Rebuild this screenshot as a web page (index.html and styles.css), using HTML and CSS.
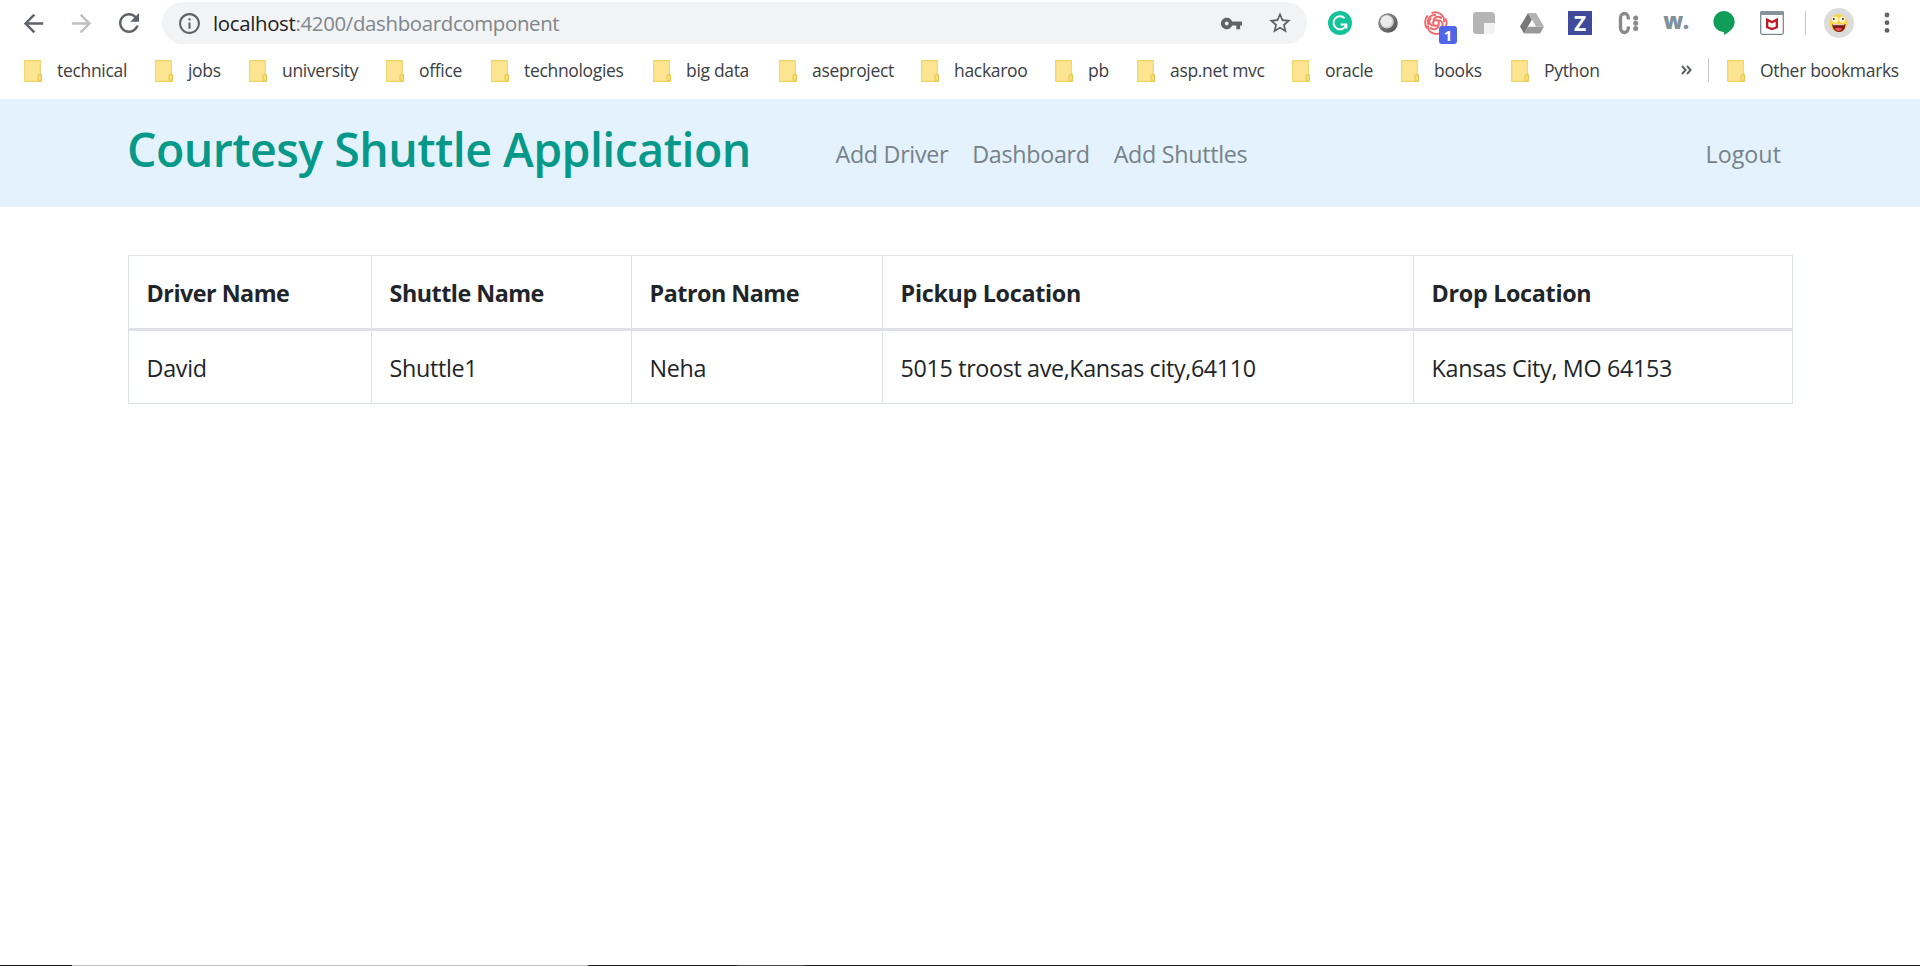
FILE: index.html
```html
<!DOCTYPE html>
<html lang="en">
<head>
<meta charset="utf-8">
<title>Courtesy Shuttle Application</title>
<link rel="stylesheet" href="styles.css">
</head>
<body>
<svg class="defs" width="0" height="0">
  <defs>
    <linearGradient id="sphere" x1="0" y1="0" x2="1" y2="1"><stop offset="0" stop-color="#9a9a9a"/><stop offset="1" stop-color="#4d4d4d"/></linearGradient>
    <symbol id="folder" viewBox="0 0 18 22">
      <path d="M.7.7h15.600v14h1v6.600H.7z" fill="#fee591" stroke="#efd468" stroke-width="1.200"/>
      <rect x="14" y="14.700" width="3.300" height="6.400" rx="1" fill="#fbe078" stroke="#e3c34d" stroke-width="1"/>
    </symbol>
  </defs>
</svg>

<header class="toolbar">
  <span class="slot"><svg width="29" height="29" viewBox="0 0 24 24" fill="#5f6368"><path d="M20 11H7.83l5.59-5.59L12 4l-8 8 8 8 1.41-1.41L7.83 13H20v-2z"/></svg></span>
  <span class="slot"><svg width="29" height="29" viewBox="0 0 24 24" fill="#bdbfc1"><path d="M12 4l-1.41 1.41L16.17 11H4v2h12.17l-5.58 5.59L12 20l8-8z"/></svg></span>
  <span class="slot"><svg width="30" height="30" viewBox="0 0 24 24" fill="#5f6368"><path d="M17.65 6.35C16.2 4.9 14.21 4 12 4c-4.42 0-7.99 3.58-7.99 8s3.57 8 7.99 8c3.73 0 6.84-2.55 7.73-6h-2.08c-.82 2.33-3.04 4-5.65 4-3.31 0-6-2.69-6-6s2.69-6 6-6c1.66 0 3.14.69 4.22 1.78L13 11h7V4l-2.35 2.35z"/></svg></span>
  <div class="omnibox">
    <svg class="info" width="25" height="25" viewBox="0 0 24 24" fill="#5f6368"><path d="M11 7h2v2h-2zm0 4h2v6h-2zm1-9C6.48 2 2 6.48 2 12s4.48 10 10 10 10-4.48 10-10S17.52 2 12 2zm0 18c-4.41 0-8-3.59-8-8s3.59-8 8-8 8 3.59 8 8-3.59 8-8 8z"/></svg>
    <span class="url"><b>localhost</b>:4200/dashboardcomponent</span>
    <svg class="key" width="23" height="23" viewBox="0 0 24 24" fill="#5f6368"><path d="M12.65 10C11.83 7.67 9.61 6 7 6c-3.31 0-6 2.69-6 6s2.69 6 6 6c2.61 0 4.83-1.67 5.65-4H17v4h4v-4h2v-4H12.65zM7 14c-1.1 0-2-.9-2-2s.9-2 2-2 2 .9 2 2-.9 2-2 2z"/></svg>
    <svg width="26" height="26" viewBox="0 0 24 24" fill="#5f6368"><path d="M22 9.24l-7.19-.62L12 2 9.19 8.63 2 9.24l5.46 4.73L5.82 21 12 17.27 18.18 21l-1.63-7.03L22 9.24zM12 15.4l-3.76 2.27 1-4.28-3.32-2.88 4.38-.38L12 6.1l1.71 4.04 4.38.38-3.32 2.88 1 4.28L12 15.4z"/></svg>
  </div>
  <div class="extensions">
    <span class="slot"><svg width="24" height="24"><circle cx="12" cy="12" r="12" fill="#15c39a"/><path d="M16.6 7.2A6.5 6.5 0 1 0 18.2 13.8M12.6 13.4h5.8v4" fill="none" stroke="#fff" stroke-width="2"/></svg></span>
    <span class="slot"><svg width="24" height="24"><circle cx="12" cy="12" r="9.8" fill="url(#sphere)"/><circle cx="11" cy="10.8" r="6.8" fill="#cfcfcf"/><circle cx="10.3" cy="10.2" r="5.6" fill="#ececec"/></svg></span>
    <span class="slot rose"><svg width="24" height="24" viewBox="0 0 24 24" fill="none" stroke="#f2696c" stroke-width="1.9"><circle cx="12" cy="12" r="2.9"/><path d="M9.500 10.500C9.500 6 14.500 4 18 7.500"/><path d="M13.500 9.500C18 8.500 20.500 13.500 17 17.500"/><path d="M14.500 13.500C14.500 18 9.500 20 6 16.500"/><path d="M10.500 14.500C6 15.500 3.500 10.500 7 6.500"/><path d="M4.500 14C2.500 9 6 3 12 4.200M7.500 2.200C13 -.5 21 3.500 20 11M21.500 7.500C24.500 13 21 19.500 15 19.800M17.500 21.500C11 25 3.500 21.500 4 14.500M3 17.500C.3 13.500 .5 8 3.800 4.500"/></svg><i class="badge">1</i></span>
    <span class="slot"><svg width="24" height="24"><path d="M4 1h15a4 4 0 0 1 4 4v7H12v11H4.500A3.500 3.500 0 0 1 1 19.500V4a3 3 0 0 1 3-3z" fill="#b5b5b5"/><path d="M12 12h11v7.500a3.500 3.500 0 0 1-3.500 3.500H12z" fill="#f2f2f2"/></svg></span>
    <span class="slot"><svg width="24" height="24"><path d="M8 2L0 15.500 4 22.500 12 8.800z" fill="#777"/><path d="M8 15.500h16l-4 7H4z" fill="#999"/><path d="M16 2l8 13.500h-8L8 2z" fill="#b3b3b3"/><path d="M12 9l3.900 6.500H8.100z" fill="#fff"/></svg></span>
    <span class="slot"><svg width="24" height="34"><path fill="#3f4a9b" d="M0 5h24v24H0z"/><text class="logo-z" x="12" y="24.600" text-anchor="middle">Z</text></svg></span>
    <span class="slot"><svg width="24" height="24"><path d="M12.300 8.500V7a3.900 4.500 0 0 0-7.800 0v10a3.900 4.500 0 0 0 7.800 0v-1.500" fill="none" stroke="#8a8a8a" stroke-width="3.400"/><g fill="#8a8a8a"><circle cx="19.700" cy="7" r="2.500"/><circle cx="19.700" cy="12.300" r="2.500"/><circle cx="19.700" cy="17.600" r="2.500"/></g></svg></span>
    <span class="slot logo-w">w.</span>
    <span class="slot"><svg width="24" height="24"><path d="M12 0a10.800 10.800 0 0 1 10.700 10.700c0 5.500-4.300 10-10.700 13.300v-2.800A10.600 10.600 0 1 1 12 0z" fill="#0f9d58"/></svg></span>
    <span class="slot"><svg width="24" height="24"><rect x=".7" y=".7" width="22.600" height="22.600" rx="1.500" fill="#fff" stroke="#7d8a92" stroke-width="1.300"/><path d="M0 1.500Q0 0 1.500 0h21Q24 0 24 1.500V4H0z" fill="#87939b"/><path d="M7.200 8.700l4.800 2.500 4.800-2.500v7.600L12 18l-4.800-1.700z" fill="none" stroke="#bd1521" stroke-width="2.300"/></svg></span>
  </div>
  <span class="divider"></span>
  <svg class="avatar" width="30" height="30"><circle cx="15" cy="15" r="15" fill="#dcdcdc"/><circle cx="14.500" cy="15" r="9" fill="#fbd34c"/><circle cx="10.800" cy="11.500" r="3.100" fill="#fff5cf"/><circle cx="18.200" cy="11.500" r="3.100" fill="#fff5cf"/><circle cx="9.800" cy="11" r="1" fill="#333"/><circle cx="19" cy="11" r="1" fill="#333"/><path d="M8 16h13.500c0 5-2.500 8-6.500 8s-6.500-3-7-8z" fill="#7c1d12"/><path d="M10.500 21q4-2.500 8 0-4 4-8 0z" fill="#ee4f55"/><path d="M8.500 16h12v1.200h-12z" fill="#e8cdbb"/></svg>
  <svg class="menu" width="6" height="22" fill="#5f6368"><circle cx="3" cy="3" r="2.400"/><circle cx="3" cy="10.700" r="2.400"/><circle cx="3" cy="18.400" r="2.400"/></svg>
</header>

<nav class="bookmarks">
  <a><svg><use href="#folder"/></svg>technical</a>
  <a><svg><use href="#folder"/></svg>jobs</a>
  <a><svg><use href="#folder"/></svg>university</a>
  <a><svg><use href="#folder"/></svg>office</a>
  <a><svg><use href="#folder"/></svg>technologies</a>
  <a><svg><use href="#folder"/></svg>big data</a>
  <a><svg><use href="#folder"/></svg>aseproject</a>
  <a><svg><use href="#folder"/></svg>hackaroo</a>
  <a><svg><use href="#folder"/></svg>pb</a>
  <a><svg><use href="#folder"/></svg>asp.net mvc</a>
  <a><svg><use href="#folder"/></svg>oracle</a>
  <a><svg><use href="#folder"/></svg>books</a>
  <a><svg><use href="#folder"/></svg>Python</a>
  <span class="more"><svg class="chevrons" width="11" height="10" fill="none" stroke="#5f6368" stroke-width="2"><path d="M1 1l3.600 4L1 9M6 1l3.600 4L6 9"/></svg></span>
  <a class="other"><svg><use href="#folder"/></svg>Other bookmarks</a>
</nav>

<nav class="navbar">
  <h1>Courtesy Shuttle Application</h1>
  <div class="links"><a>Add Driver</a><a>Dashboard</a><a>Add Shuttles</a></div>
  <a class="logout">Logout</a>
</nav>

<main>
  <table>
    <colgroup><col class="c1"><col class="c2"><col class="c3"><col class="c4"><col class="c5"></colgroup>
    <thead><tr><th>Driver Name</th><th>Shuttle Name</th><th>Patron Name</th><th class="loc">Pickup Location</th><th class="loc">Drop Location</th></tr></thead>
    <tbody><tr><td>David</td><td>Shuttle1</td><td>Neha</td><td class="pickup">5015 troost ave,Kansas city,64110</td><td>Kansas City, MO 64153</td></tr></tbody>
  </table>
</main>

<footer class="edge"><i class="edge-start"></i><i class="edge-active"></i><i class="edge-rest"></i></footer>
</body>
</html>
```
FILE: styles.css
```css
* { box-sizing: border-box; }
body {
  margin: 0;
  height: 966px;
  display: flex;
  flex-direction: column;
  overflow: hidden;
  background: #fff;
  color: #212529;
  font-family: "Open Sans", "Noto Sans", sans-serif;
  font-size: 23.3px;
  letter-spacing: -0.31px;
}
svg { display: block; flex: none; }
.defs { position: absolute; }

.toolbar { display: flex; align-items: center; height: 46px; padding-left: 9px; }
.slot { width: 48px; display: flex; align-items: center; justify-content: center; flex: none; }
.omnibox {
  display: flex;
  align-items: center;
  width: 1145px;
  height: 42px;
  margin: 0 9px;
  padding: 0 14px 0 15px;
  border-radius: 21px;
  background: #f1f3f4;
}
.url {
  flex: 1;
  margin-left: 11px;
  color: #80868b;
  font-size: 20.4px;
  letter-spacing: -0.33px;
  white-space: nowrap;
}
.url b { font-weight: 400; color: #202124; }
.key { margin-right: 24px; }
.extensions { display: flex; align-items: center; height: 46px; }
.rose { position: relative; }
.badge {
  position: absolute;
  left: 27px;
  top: 15px;
  width: 18px;
  height: 18px;
  border-radius: 3px;
  background: #4f66ea;
  color: #fff;
  font: 700 15px/18px "Open Sans", sans-serif;
  letter-spacing: 0;
  text-align: center;
}
.logo-z { font: 700 21px "Open Sans", sans-serif; fill: #fff; letter-spacing: 0; }
.logo-w {
  padding-bottom: 7px;
  color: #7f929c;
  font: 800 22px/30px "Open Sans", sans-serif;
  letter-spacing: -0.5px;
}
.divider { width: 1px; height: 24px; margin: 0 18px 0 9px; background: #c8cacd; }
.menu { margin-left: 30px; }

.bookmarks {
  display: grid;
  grid-template-columns: 131px 94px 137px 105px 162px 126px 142px 134px 82px 155px 109px 110px 170px 46px 1fr;
  align-items: center;
  height: 53px;
  padding: 0 0 5px 24px;
  color: #3c4043;
  font-size: 17.5px;
  letter-spacing: -0.32px;
}
.bookmarks a { display: flex; align-items: center; gap: 15px; white-space: nowrap; }
.bookmarks a svg { width: 18px; height: 22px; margin-top: 2px; }
.more { display: flex; align-items: center; height: 24px; width: 28px; border-right: 1px solid #c8cacd; }

.navbar {
  display: flex;
  align-items: center;
  height: 108px;
  padding: 0 0 1px 127px;
  background: #e3f2fd;
  color: #77828a;
}
.navbar h1 {
  width: 708.5px;
  margin: 0;
  padding-bottom: 8px;
  color: #069888;
  font-size: 46.5px;
  font-weight: 600;
  letter-spacing: -0.56px;
  white-space: nowrap;
}
.links { display: flex; gap: 24px; width: 870px; padding-top: 2px; }
.logout { padding-top: 2px; letter-spacing: 0; }

main { flex: 1; padding: 48px 0 0 128px; }
table {
  width: 1665px;
  table-layout: fixed;
  border-collapse: separate;
  border-spacing: 0;
  border: solid #dee2e6;
  border-width: 1px 0 0 1px;
}
.c1 { width: 243px; }
.c2 { width: 260px; }
.c3 { width: 251px; }
.c4 { width: 531px; }
.c5 { width: 379px; }
th, td {
  padding: 2px 0 0 17.6px;
  border-right: 1px solid #dee2e6;
  text-align: left;
  white-space: nowrap;
}
th { height: 75px; border-bottom: 3px solid #dee0e5; font-weight: 700; letter-spacing: -0.5px; }
td { height: 73px; border-bottom: 1px solid #dee2e6; }
.loc { letter-spacing: -0.3px; }
.pickup { letter-spacing: -0.35px; }

.edge { display: flex; height: 1px; }
.edge-start { width: 72px; background: #151515; }
.edge-active { width: 516px; background: #bdbdbd; }
.edge-rest { flex: 1; background: linear-gradient(90deg, #1e1e1c 0 149px, #474744 149px 217px, #1e1e1c 217px); }
```
